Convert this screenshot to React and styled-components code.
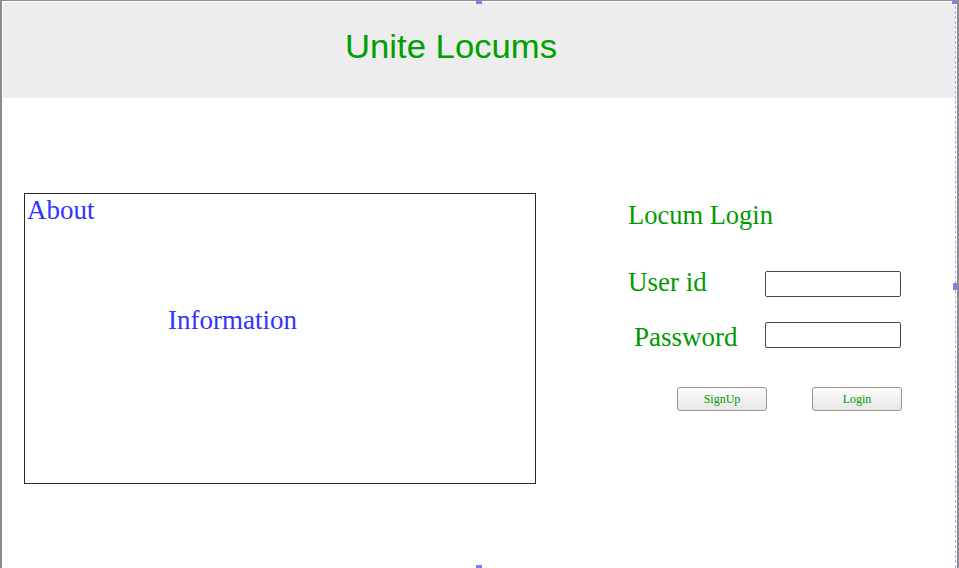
import styled, { createGlobalStyle } from "styled-components";

const GlobalStyle = createGlobalStyle`
  html, body {
    margin: 0;
    padding: 0;
    background: #ffffff;
  }
  body {
    font-family: "Liberation Serif", "Times New Roman", serif;
  }
`;

const Frame = styled.div`
  position: relative;
  box-sizing: border-box;
  width: 959px;
  height: 568px;
  border-top: 1px solid #8c8c8c;
  border-left: 2px solid #8c8c8c;
  border-right: 2px solid #8c8c8c;
  background: #ffffff;
  overflow: hidden;
`;

const Canvas = styled.div`
  box-sizing: border-box;
  height: 100%;
  margin-right: 1px;
  padding: 1px 0 0 1px;
  border-right: 1px dashed #a8a8f0;
  display: flex;
  flex-direction: column;
`;

const Header = styled.header`
  height: 96px;
  background: #ededed;
  display: flex;
  align-items: center;
  padding-left: 2px;
`;

const Title = styled.h1`
  margin: 0 0 9px 340px;
  font-family: "Liberation Sans", Arial, sans-serif;
  font-weight: 400;
  font-size: 34px;
  line-height: 1;
  color: #00a000;
  transform: scaleX(1.02);
  transform-origin: left;
`;

const Content = styled.main`
  display: flex;
  align-items: flex-start;
  padding: 95px 0 0 21px;
`;

const InfoBox = styled.section`
  box-sizing: border-box;
  width: 512px;
  height: 291px;
  border: 1px solid #2a2a2a;
  padding: 3px 0 0 2px;
`;

const BlueText = styled.div`
  font-size: 27px;
  line-height: 1;
  color: #3333ff;
  margin: ${(p) => p.$margin || "0"};
`;

const LoginPanel = styled.section`
  margin-left: 92px;
  padding-top: 9px;
  width: 274px;
`;

const PanelTitle = styled.h2`
  margin: 0 0 40px;
  font-weight: 400;
  font-size: 26.5px;
  line-height: 1;
  color: #009900;
`;

const FieldRow = styled.div`
  display: grid;
  grid-template-columns: 137px 136px;
  align-items: start;
  margin-bottom: ${(p) => p.$gap || "0"};
`;

const Label = styled.label`
  font-size: 27px;
  line-height: 1;
  color: #009900;
  padding-left: ${(p) => p.$indent || "0"};
  margin-top: ${(p) => p.$shift || "0"};
`;

const Input = styled.input`
  box-sizing: border-box;
  width: 136px;
  height: 26px;
  margin: ${(p) => p.$margin || "0"};
  border: 1px solid #4a4a4a;
  border-radius: 2px;
  background: #ffffff;
  outline: none;
`;

const ButtonRow = styled.div`
  display: flex;
  gap: 45px;
  margin: 36px 0 0 49px;
`;

const Button = styled.button`
  box-sizing: border-box;
  width: 90px;
  height: 24px;
  padding: 2px 0 0;
  border: 1px solid #a09484;
  border-radius: 3px;
  background: linear-gradient(#fdfdfd, #e6e6e6);
  font-family: "Liberation Serif", "Times New Roman", serif;
  font-size: 12px;
  color: #009900;
`;

const Handle = styled.span`
  position: absolute;
  width: 6px;
  height: ${(p) => p.$h || "4px"};
  background: #7f7ff2;
  top: ${(p) => p.$top || "auto"};
  bottom: ${(p) => p.$bottom || "auto"};
  left: ${(p) => p.$left || "auto"};
  right: ${(p) => p.$right || "auto"};
`;

export default function App() {
  return (
    <>
      <GlobalStyle />
      <Frame>
        <Canvas>
          <Header>
            <Title>Unite Locums</Title>
          </Header>
          <Content>
            <InfoBox>
              <BlueText>About</BlueText>
              <BlueText $margin="83px 0 0 141px">Information</BlueText>
            </InfoBox>
            <LoginPanel>
              <PanelTitle>Locum Login</PanelTitle>
              <FieldRow $gap="25px">
                <Label>User id</Label>
                <Input type="text" $margin="2px 0 0" />
              </FieldRow>
              <FieldRow>
                <Label $indent="6px" $shift="2px">Password</Label>
                <Input type="password" />
              </FieldRow>
              <ButtonRow>
                <Button>SignUp</Button>
                <Button>Login</Button>
              </ButtonRow>
            </LoginPanel>
          </Content>
        </Canvas>
        <Handle $top="-1px" $left="474px" />
        <Handle $top="-1px" $right="-1px" $h="4px" />
        <Handle $top="282px" $right="-2px" $h="7px" />
        <Handle $bottom="0" $left="474px" $h="3px" />
      </Frame>
    </>
  );
}
